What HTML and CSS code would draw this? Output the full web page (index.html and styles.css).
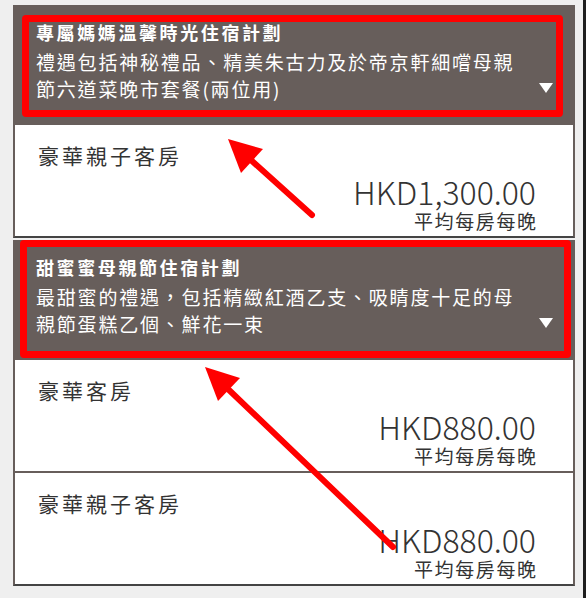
FILE: index.html
```html
<!DOCTYPE html>
<html>
  <head>
    <meta charset="UTF-8" />
    <meta name="viewport" content="width=device-width, initial-scale=1.0" />
    <title>住宿計劃</title>
    <link rel="stylesheet" href="styles.css">
  </head>
  <body>
    <div class="page">
      <div class="package">
        <div class="package-head">
          <div class="package-text">
            <h3 class="package-title">專屬媽媽溫馨時光住宿計劃</h3>
            <p class="package-desc">禮遇包括神秘禮品、精美朱古力及於帝京軒細嚐母親<br />節六道菜晚市套餐(兩位用)</p>
          </div>
          <span class="toggle"></span>
          <div class="mark mark-one"></div>
        </div>
        <div class="room room-last">
          <div class="room-name">豪華親子客房</div>
          <div class="room-price">
            <div class="price">HKD1,300.00</div>
            <div class="per-night">平均每房每晚</div>
          </div>
        </div>
      </div>

      <div class="package">
        <div class="package-head">
          <div class="package-text">
            <h3 class="package-title">甜蜜蜜母親節住宿計劃</h3>
            <p class="package-desc">最甜蜜的禮遇，包括精緻紅酒乙支、吸睛度十足的母<br />親節蛋糕乙個、鮮花一束</p>
          </div>
          <span class="toggle"></span>
          <div class="mark mark-two"></div>
        </div>
        <div class="room">
          <div class="room-name">豪華客房</div>
          <div class="room-price">
            <div class="price">HKD880.00</div>
            <div class="per-night">平均每房每晚</div>
          </div>
        </div>
        <div class="room room-last">
          <div class="room-name">豪華親子客房</div>
          <div class="room-price">
            <div class="price">HKD880.00</div>
            <div class="per-night">平均每房每晚</div>
          </div>
        </div>
      </div>
    </div>

    <!-- annotation arrows -->
    <svg class="arrows" width="586" height="598" viewBox="0 0 586 598">
      <line x1="312" y1="215" x2="252" y2="161" stroke="#ff0000" stroke-width="6" stroke-linecap="round" />
      <polygon points="228,139 263,149 241,173" fill="#ff0000" />
      <line x1="393" y1="547" x2="229" y2="390" stroke="#ff0000" stroke-width="6" stroke-linecap="round" />
      <polygon points="205,367 240,378 218,401" fill="#ff0000" />
    </svg>
  </body>
</html>
```

FILE: styles.css
```css
body {
  margin: 0;
  font-family: "Noto Sans CJK TC", "Noto Sans", sans-serif;
  background-color: #efefef;
  color: #333;
}

.page {
  min-height: 598px;
  box-sizing: border-box;
  padding: 5px 0 0 13px;
  border-right: 3px solid #1e1e1e;
  width: 586px;
}

.package {
  width: 562px;
  margin-bottom: 2px;
}

.package-head {
  position: relative;
  display: flex;
  align-items: flex-end;
  background-color: #675e5b;
  color: #ffffff;
  padding: 15px 22px 23px 23px;
}

.package-text {
  flex: 1;
}

.package-title {
  margin: 0;
  font-size: 18px;
  line-height: 24px;
  font-weight: bold;
  letter-spacing: 2.6px;
}

.package-desc {
  margin: 4px 0 0 0;
  font-size: 19px;
  line-height: 27px;
  letter-spacing: 1.8px;
}

.toggle {
  width: 0;
  height: 0;
  border-left: 7px solid transparent;
  border-right: 7px solid transparent;
  border-top: 10px solid #ffffff;
  margin-bottom: 9px;
}

.mark {
  position: absolute;
  border: 7px solid #ff0000;
  border-radius: 4px;
  box-sizing: border-box;
}

.mark-one {
  left: 9px;
  top: 10px;
  width: 541px;
  height: 102px;
}

.mark-two {
  left: 7px;
  top: 0;
  width: 551px;
  height: 118px;
}

.room {
  background-color: #ffffff;
  border-left: 2px solid #675e5b;
  border-right: 2px solid #675e5b;
  border-bottom: 2px solid #675e5b;
  padding: 15px 37px 4px 23px;
}

.room-last {
  border-bottom-color: #444;
}

.room-name {
  font-size: 21px;
  line-height: 30px;
  letter-spacing: 3px;
}

.room-price {
  text-align: right;
  margin-top: 2px;
}

.price {
  font-size: 32px;
  line-height: 38px;
  font-weight: 300;
}

.per-night {
  font-size: 19px;
  line-height: 22px;
  letter-spacing: 1.6px;
  margin-right: -1.6px;
}

.arrows {
  position: absolute;
  left: 0;
  top: 0;
  pointer-events: none;
}
```
